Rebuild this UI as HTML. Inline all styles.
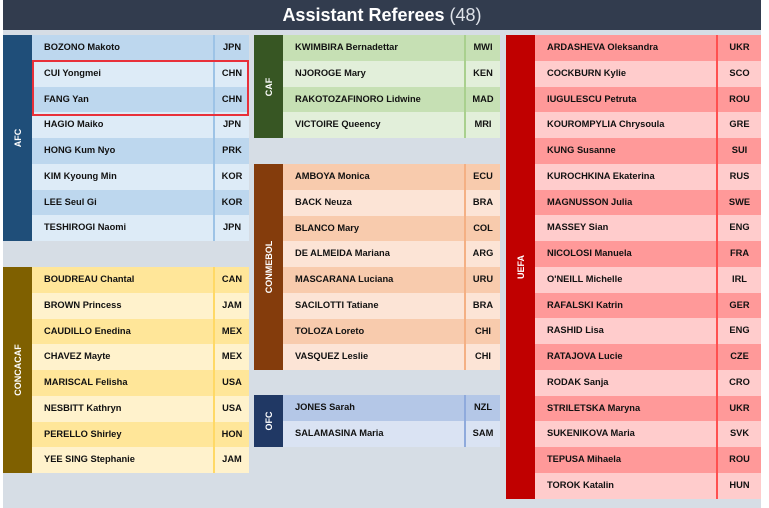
<!DOCTYPE html>
<html><head><meta charset="utf-8"><style>
*{margin:0;padding:0;box-sizing:border-box}
body{width:769px;height:508px;background:#fff;position:relative;overflow:hidden;font-family:"Liberation Sans",Arial,sans-serif}
#bg{position:absolute;left:3px;top:0;width:758px;height:508px;background:#d6dde5}
#hd{position:absolute;left:3px;top:0;width:758px;height:30px;background:#323c4e;color:#fff;text-align:center;font-size:18px;line-height:30px;font-weight:bold}
#hd span{font-weight:normal;color:#dfe3ea}
.blk{position:absolute}
.lab{position:absolute;left:0;top:0;bottom:0;width:29px}
.lab span{position:absolute;left:50%;top:50%;transform:translate(-50%,-50%) rotate(-90deg);color:#fff;font-size:9px;font-weight:bold;white-space:nowrap}
.row{position:absolute;left:29px;height:25.75px;font-size:9.3px;font-weight:bold;color:#111;line-height:25.75px}
.row .n{position:absolute;left:12px}
.row .c{position:absolute;right:0;text-align:center;top:0;bottom:0;border-left:2px solid}
#box{position:absolute;left:32px;top:60px;width:217px;height:56px;border:2px solid #e8303a}
</style></head><body>
<div id="bg"></div>
<div id="hd">Assistant Referees <span>(48)</span></div>
<div id="app"></div>
<div id="box"></div>
<script>
var G=[
{x:3,y:35,w:246,cw:36,lab:"AFC",lc:"#1f4e79",a:"#bdd7ee",b:"#ddebf7",d:"#9dc3e6",r:[["BOZONO Makoto","JPN"],["CUI Yongmei","CHN"],["FANG Yan","CHN"],["HAGIO Maiko","JPN"],["HONG Kum Nyo","PRK"],["KIM Kyoung Min","KOR"],["LEE Seul Gi","KOR"],["TESHIROGI Naomi","JPN"]]},
{x:3,y:267,w:246,cw:36,lab:"CONCACAF",lc:"#7f6000",a:"#ffe699",b:"#fff2cc",d:"#ffd966",r:[["BOUDREAU Chantal","CAN"],["BROWN Princess","JAM"],["CAUDILLO Enedina","MEX"],["CHAVEZ Mayte","MEX"],["MARISCAL Felisha","USA"],["NESBITT Kathryn","USA"],["PERELLO Shirley","HON"],["YEE SING Stephanie","JAM"]]},
{x:254,y:35,w:246,cw:36,lab:"CAF",lc:"#375623",a:"#c6e0b4",b:"#e2efda",d:"#a9d08e",r:[["KWIMBIRA Bernadettar","MWI"],["NJOROGE Mary","KEN"],["RAKOTOZAFINORO Lidwine","MAD"],["VICTOIRE Queency","MRI"]]},
{x:254,y:164,w:246,cw:36,lab:"CONMEBOL",lc:"#843c0c",a:"#f8cbad",b:"#fce4d6",d:"#f4b084",r:[["AMBOYA Monica","ECU"],["BACK Neuza","BRA"],["BLANCO Mary","COL"],["DE ALMEIDA Mariana","ARG"],["MASCARANA Luciana","URU"],["SACILOTTI Tatiane","BRA"],["TOLOZA Loreto","CHI"],["VASQUEZ Leslie","CHI"]]},
{x:254,y:395,w:246,cw:36,lab:"OFC",lc:"#203864",a:"#b4c7e7",b:"#dae3f3",d:"#8faadc",r:[["JONES Sarah","NZL"],["SALAMASINA Maria","SAM"]]},
{x:506,y:35,w:255,cw:45,lab:"UEFA",lc:"#c00000",a:"#ff9999",b:"#ffcccc",d:"#ff5050",r:[["ARDASHEVA Oleksandra","UKR"],["COCKBURN Kylie","SCO"],["IUGULESCU Petruta","ROU"],["KOUROMPYLIA Chrysoula","GRE"],["KUNG Susanne","SUI"],["KUROCHKINA Ekaterina","RUS"],["MAGNUSSON Julia","SWE"],["MASSEY Sian","ENG"],["NICOLOSI Manuela","FRA"],["O'NEILL Michelle","IRL"],["RAFALSKI Katrin","GER"],["RASHID Lisa","ENG"],["RATAJOVA Lucie","CZE"],["RODAK Sanja","CRO"],["STRILETSKA Maryna","UKR"],["SUKENIKOVA Maria","SVK"],["TEPUSA Mihaela","ROU"],["TOROK Katalin","HUN"]]}
];
var h="";
G.forEach(function(g){
 var H=g.r.length*25.75;
 h+='<div class="blk" style="left:'+g.x+'px;top:'+g.y+'px;width:'+g.w+'px;height:'+H+'px">';
 h+='<div class="lab" style="background:'+g.lc+'"><span>'+g.lab+'</span></div>';
 g.r.forEach(function(r,i){
  var c=i%2?g.b:g.a;
  h+='<div class="row" style="top:'+(i*25.75)+'px;width:'+(g.w-29)+'px;background:'+c+'"><span class="n">'+r[0]+'</span><span class="c" style="width:'+g.cw+'px;border-color:'+g.d+'">'+r[1]+'</span></div>';
 });
 h+='</div>';
});
document.getElementById("app").innerHTML=h;
</script>
</body></html>
